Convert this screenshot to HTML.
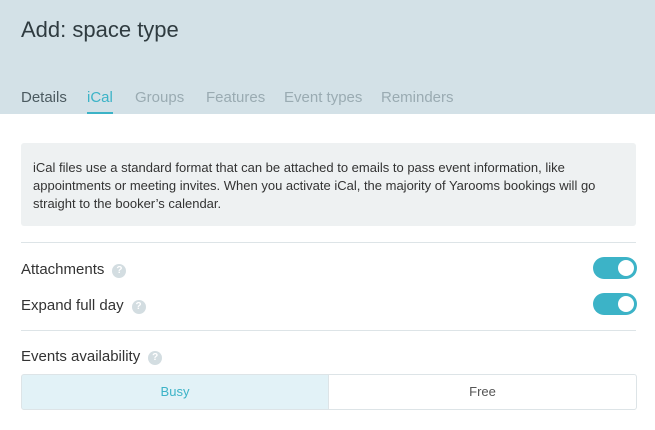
<!DOCTYPE html>
<html><head><style>
*{margin:0;padding:0;box-sizing:border-box}
body{width:655px;height:430px;overflow:hidden;background:#fff;font-family:"Liberation Sans",sans-serif;position:relative;color:#3d4a50}
.hdr{position:absolute;left:0;top:0;width:655px;height:114px;background:#d3e1e7}
.title{position:absolute;left:21px;top:17px;font-size:22px;color:#2f3b40}
.tab{position:absolute;top:89px;font-size:15px;color:#9aabb2}
.ul{position:absolute;left:87px;top:112px;width:26px;height:2px;background:#3cb3c7}
.info{position:absolute;left:21px;top:143px;width:615px;height:83px;background:#eef1f2;border-radius:3px;padding:16px 12px;font-size:13px;line-height:18px;color:#333}
.hr{position:absolute;left:21px;width:615px;height:1px;background:#dde4e7}
.lbl{position:absolute;left:21px;font-size:15px;color:#333}
.q{display:inline-block;width:14px;height:14px;border-radius:50%;background:#d3dde1;color:#fff;font-size:10px;text-align:center;line-height:14px;vertical-align:1px;margin-left:8px;font-weight:bold}
.tg{position:absolute;left:593px;width:44px;height:22px;border-radius:11px;background:#3cb3c7}
.tg:after{content:"";position:absolute;right:3px;top:3px;width:16px;height:16px;border-radius:50%;background:#fff}
.seg{position:absolute;top:374px;height:36px;border:1px solid #dde4e7;font-size:13px;text-align:center;line-height:34px}
</style></head><body>
<div class="hdr"></div>
<div class="title">Add: space type</div>
<div class="tab" style="left:21px;color:#4b5a60">Details</div>
<div class="tab" style="left:87px;color:#3cb3c7">iCal</div>
<div class="tab" style="left:135px">Groups</div>
<div class="tab" style="left:206px">Features</div>
<div class="tab" style="left:284px">Event types</div>
<div class="tab" style="left:381px">Reminders</div>
<div class="ul"></div>
<div class="info">iCal files use a standard format that can be attached to emails to pass event information, like appointments or meeting invites. When you activate iCal, the majority of Yarooms bookings will go straight to the booker’s calendar.</div>
<div class="hr" style="top:242px"></div>
<div class="lbl" style="top:261px">Attachments<span class="q">?</span></div>
<div class="tg" style="top:257px"></div>
<div class="lbl" style="top:297px">Expand full day<span class="q">?</span></div>
<div class="tg" style="top:293px"></div>
<div class="hr" style="top:330px"></div>
<div class="lbl" style="top:348px">Events availability<span class="q">?</span></div>
<div class="seg" style="left:21px;width:308px;background:#e2f2f7;color:#3cb3c7;border-radius:3px 0 0 3px">Busy</div>
<div class="seg" style="left:328px;width:309px;color:#555;border-radius:0 3px 3px 0">Free</div>
</body></html>
